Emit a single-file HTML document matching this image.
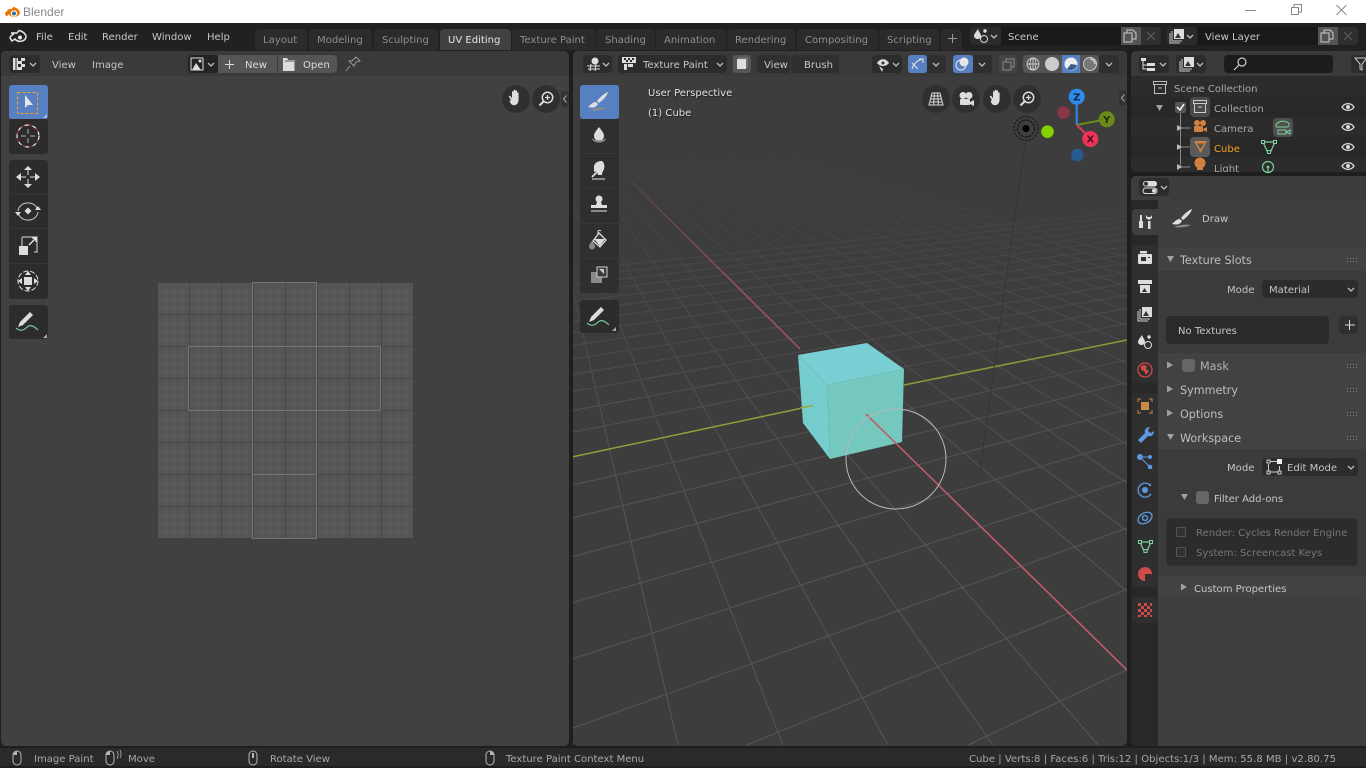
<!DOCTYPE html>
<html><head><meta charset="utf-8"><title>Blender</title>
<style>
html,body{margin:0;padding:0;width:1366px;height:768px;overflow:hidden;background:#1e1e1e}
div{position:absolute;box-sizing:border-box}
.t{white-space:nowrap;font:10.05px/14px "DejaVu Sans","Liberation Sans",sans-serif;color:#c6c6c6;margin-top:4px}
.d{color:#a8a8a8}
.s{text-shadow:1px 1px 1px #1a1a1a;color:#e2e2e2}
.k{background:#2c2c2c;border-radius:4px}
svg{position:absolute;left:0;top:0}
</style></head><body>
<div style="left:0;top:0;width:1366px;height:23px;background:#fff"></div>
<div class="t" style="left:23px;top:0px;font:12px/16px 'Liberation Sans',sans-serif;color:#888">Blender</div>

<div style="left:0;top:23px;width:1366px;height:28px;background:#212121"></div>
<div class="t" style="left:36px;top:27px">File</div>
<div class="t" style="left:68px;top:27px">Edit</div>
<div class="t" style="left:102px;top:27px">Render</div>
<div class="t" style="left:152px;top:27px">Window</div>
<div class="t" style="left:207px;top:27px">Help</div>

<div style="left:255px;top:29px;width:52px;height:21px;background:#2b2b2b;border-radius:4px 4px 0 0"></div>
<div style="left:309px;top:29px;width:63px;height:21px;background:#2b2b2b;border-radius:4px 4px 0 0"></div>
<div style="left:374px;top:29px;width:64px;height:21px;background:#2b2b2b;border-radius:4px 4px 0 0"></div>
<div style="left:440px;top:29px;width:71px;height:21px;background:#414141;border-radius:4px 4px 0 0"></div>
<div style="left:512px;top:29px;width:84px;height:21px;background:#2b2b2b;border-radius:4px 4px 0 0"></div>
<div style="left:597px;top:29px;width:58px;height:21px;background:#2b2b2b;border-radius:4px 4px 0 0"></div>
<div style="left:656px;top:29px;width:70px;height:21px;background:#2b2b2b;border-radius:4px 4px 0 0"></div>
<div style="left:727px;top:29px;width:68px;height:21px;background:#2b2b2b;border-radius:4px 4px 0 0"></div>
<div style="left:797px;top:29px;width:81px;height:21px;background:#2b2b2b;border-radius:4px 4px 0 0"></div>
<div style="left:879px;top:29px;width:60px;height:21px;background:#2b2b2b;border-radius:4px 4px 0 0"></div>
<div style="left:941px;top:29px;width:21px;height:21px;background:#2b2b2b;border-radius:4px 4px 0 0"></div>
<div class="t" style="left:263px;top:30px;color:#8e8e8e">Layout</div>
<div class="t" style="left:317px;top:30px;color:#8e8e8e">Modeling</div>
<div class="t" style="left:382px;top:30px;color:#8e8e8e">Sculpting</div>
<div class="t" style="left:448px;top:30px;color:#e6e6e6">UV Editing</div>
<div class="t" style="left:520px;top:30px;color:#8e8e8e">Texture Paint</div>
<div class="t" style="left:605px;top:30px;color:#8e8e8e">Shading</div>
<div class="t" style="left:664px;top:30px;color:#8e8e8e">Animation</div>
<div class="t" style="left:735px;top:30px;color:#8e8e8e">Rendering</div>
<div class="t" style="left:805px;top:30px;color:#8e8e8e">Compositing</div>
<div class="t" style="left:887px;top:30px;color:#8e8e8e">Scripting</div>

<div class="k" style="left:970px;top:27px;width:31px;height:18px;background:#2b2b2b"></div>
<div style="left:1001px;top:27px;width:120px;height:18px;background:#1a1a1a"></div>
<div style="left:1121px;top:27px;width:20px;height:18px;background:#545454"></div>
<div style="left:1141px;top:27px;width:20px;height:18px;background:#2f2f2f;border-radius:0 4px 4px 0"></div>
<div class="t" style="left:1008px;top:27px">Scene</div>
<div class="k" style="left:1166px;top:27px;width:31px;height:18px;background:#2b2b2b"></div>
<div style="left:1198px;top:27px;width:120px;height:18px;background:#1a1a1a"></div>
<div style="left:1318px;top:27px;width:20px;height:18px;background:#545454"></div>
<div style="left:1338px;top:27px;width:20px;height:18px;background:#2f2f2f;border-radius:0 4px 4px 0"></div>
<div class="t" style="left:1205px;top:27px">View Layer</div>

<!-- UV editor -->
<div style="left:1px;top:51px;width:568px;height:695px;background:#414141;border-radius:5px;overflow:hidden">
  <div style="left:0;top:0;width:568px;height:25px;background:#3a3a3a"></div>
</div>
<div class="k" style="left:9px;top:55px;width:31px;height:18px"></div>
<div class="t" style="left:52px;top:55px">View</div>
<div class="t" style="left:92px;top:55px">Image</div>
<div class="k" style="left:188px;top:55px;width:31px;height:18px;background:#232323"></div>
<div style="left:218px;top:55px;width:59px;height:18px;background:#555;"></div>
<div style="left:278px;top:55px;width:59px;height:18px;background:#555;border-radius:0 4px 4px 0"></div>
<div class="t" style="left:245px;top:55px;color:#ddd">New</div>
<div class="t" style="left:303px;top:55px;color:#ddd">Open</div>

<!-- viewport -->
<div style="left:573px;top:51px;width:554px;height:695px;background:#3d3d3d;border-radius:5px;overflow:hidden">
  <div style="left:0;top:0;width:554px;height:25px;background:#3a3a3a"></div>
</div>

<!-- outliner -->
<div style="left:1131px;top:51px;width:235px;height:121px;background:#282828;border-radius:5px 0 0 5px;overflow:hidden">
  <div style="left:0;top:0;width:235px;height:25px;background:#3a3a3a"></div>
  <div style="left:0;top:25px;width:235px;height:21px;background:#2c2c2c"></div>
  <div style="left:0;top:46px;width:235px;height:20px;background:#282828"></div>
  <div style="left:0;top:66px;width:235px;height:20px;background:#2c2c2c"></div>
  <div style="left:0;top:86px;width:235px;height:20px;background:#282828"></div>
  <div style="left:0;top:106px;width:235px;height:15px;background:#2c2c2c"></div>
</div>
<div class="k" style="left:1139px;top:55px;width:30px;height:18px"></div>
<div class="k" style="left:1176px;top:55px;width:30px;height:18px"></div>
<div class="k" style="left:1224px;top:55px;width:109px;height:18px;background:#1c1c1c"></div>
<div class="k" style="left:1351px;top:55px;width:20px;height:18px"></div>
<div class="t" style="left:1174px;top:79px;color:#a8a8a8">Scene Collection</div>
<div style="left:1190px;top:97px;width:20px;height:20px;background:#4a4a4a;border-radius:4px"></div>
<div style="left:1190px;top:137px;width:20px;height:20px;background:#5a5a5a;border-radius:4px"></div>
<div style="left:1273px;top:118px;width:20px;height:19px;background:#4f4f4f;border-radius:4px"></div>
<div class="t d" style="left:1214px;top:99px">Collection</div>
<div class="t d" style="left:1214px;top:119px">Camera</div>
<div class="t" style="left:1214px;top:139px;color:#f2a11f">Cube</div>
<div style="left:1214px;top:157px;width:60px;height:15px;overflow:hidden"><div class="t d" style="left:0;top:2px">Light</div></div>

<!-- properties -->
<div style="left:1131px;top:176px;width:235px;height:570px;background:#282828;border-radius:5px 0 0 5px;overflow:hidden">
  <div style="left:0;top:0;width:235px;height:24px;background:#3d3d3d"></div>
  <div style="left:27px;top:24px;width:208px;height:546px;background:#3f3f3f"></div>
  <div style="left:27px;top:72px;width:208px;height:23px;background:#424242"></div>
  <div style="left:27px;top:95px;width:208px;height:82px;background:#3b3b3b"></div>
  <div style="left:27px;top:177px;width:208px;height:96px;background:#424242"></div>
  <div style="left:27px;top:273px;width:208px;height:126px;background:#3b3b3b"></div>
  <div style="left:27px;top:400px;width:208px;height:22px;background:#424242"></div>
</div>
<div class="k" style="left:1139px;top:178px;width:30px;height:18px"></div>
<div style="left:1132px;top:209px;width:26px;height:26px;background:#3f3f3f;border-radius:4px 0 0 4px"></div>
<div style="left:1132px;top:245px;width:26px;height:138px;background:#2f2f2f;border-radius:4px 0 0 4px"></div>
<div style="left:1132px;top:393px;width:26px;height:194px;background:#2f2f2f;border-radius:4px 0 0 4px"></div>
<div style="left:1132px;top:597px;width:26px;height:26px;background:#2f2f2f;border-radius:4px 0 0 4px"></div>
<div class="t" style="left:1202px;top:209px">Draw</div>
<div class="t" style="left:1180px;top:250px;font-size:11.2px;color:#bdbdbd">Texture Slots</div>
<div class="t" style="left:1227px;top:280px">Mode</div>
<div class="k" style="left:1262px;top:280px;width:96px;height:18px"></div>
<div class="t" style="left:1269px;top:280px">Material</div>
<div class="k" style="left:1166px;top:316px;width:163px;height:28px;background:#2a2a2a"></div>
<div class="t" style="left:1178px;top:321px">No Textures</div>
<div class="k" style="left:1339px;top:316px;width:19px;height:18px;background:#2f2f2f"></div>
<div style="left:1182px;top:359px;width:13px;height:13px;background:#666;border-radius:3px"></div>
<div class="t" style="left:1200px;top:356px;font-size:11.2px;color:#b0b0b0">Mask</div>
<div class="t" style="left:1180px;top:380px;font-size:11.2px;color:#bdbdbd">Symmetry</div>
<div class="t" style="left:1180px;top:404px;font-size:11.2px;color:#bdbdbd">Options</div>
<div class="t" style="left:1180px;top:428px;font-size:11.2px;color:#bdbdbd">Workspace</div>
<div class="t" style="left:1227px;top:458px">Mode</div>
<div class="k" style="left:1262px;top:458px;width:96px;height:18px"></div>
<div class="t" style="left:1287px;top:458px">Edit Mode</div>
<div style="left:1196px;top:491px;width:13px;height:13px;background:#666;border-radius:3px"></div>
<div class="t" style="left:1214px;top:489px">Filter Add-ons</div>
<div class="k" style="left:1166px;top:518px;width:192px;height:48px;background:#2c2c2c;border:1px solid #333"></div>
<div style="left:1176px;top:527px;width:10px;height:10px;border:1px solid #555;background:#303030;border-radius:2px"></div>
<div style="left:1176px;top:547px;width:10px;height:10px;border:1px solid #555;background:#303030;border-radius:2px"></div>
<div class="t" style="left:1196px;top:523px;color:#767676">Render: Cycles Render Engine</div>
<div class="t" style="left:1196px;top:543px;color:#767676">System: Screencast Keys</div>
<div class="t" style="left:1194px;top:579px;color:#c6c6c6">Custom Properties</div>

<!-- status bar -->
<div style="left:0;top:748px;width:1366px;height:18px;background:#2a2a2a"></div>
<div class="t d" style="left:34px;top:749px">Image Paint</div>
<div class="t d" style="left:128px;top:749px">Move</div>
<div class="t d" style="left:270px;top:749px">Rotate View</div>
<div class="t d" style="left:506px;top:749px">Texture Paint Context Menu</div>
<div class="t d" style="right:30px;top:749px;letter-spacing:.03px">Cube | Verts:8 | Faces:6 | Tris:12 | Objects:1/3 | Mem: 55.8 MB | v2.80.75</div>

<svg width="1366" height="768" viewBox="0 0 1366 768" fill="none">
<defs>
<linearGradient id="fade" gradientUnits="userSpaceOnUse" x1="0" y1="150" x2="0" y2="520"><stop offset="0" stop-color="#565656" stop-opacity="0"/><stop offset=".4" stop-color="#565656" stop-opacity=".5"/><stop offset="1" stop-color="#565656"/></linearGradient>
<linearGradient id="rf" gradientUnits="userSpaceOnUse" x1="0" y1="170" x2="0" y2="300"><stop offset="0" stop-color="#a04e5a" stop-opacity=".15"/><stop offset="1" stop-color="#b05562"/></linearGradient>
<clipPath id="vp"><rect x="573" y="76" width="554" height="670"/></clipPath>
<g id="ch"><path d="M0 0l3 3 3-3" stroke="#bdbdbd" stroke-width="1.3"/></g>
<g id="eye"><path d="M-6 0c3-4.500 9-4.500 12 0c-3 4.500-9 4.500-12 0z" stroke="#ddd" stroke-width="1.3"/><circle r="2" fill="#ddd"/></g>
<g id="tri"><path d="M-3-3h7l-3.500 6z" fill="#a0a0a0"/></g>
<g id="trr"><path d="M-3-3.500l6 3.500-6 3.500z" fill="#a0a0a0"/></g>
<g id="grip" fill="#8a8a8a"><rect x="0" y="0" width="1" height="1"/><rect x="3" y="0" width="1" height="1"/><rect x="6" y="0" width="1" height="1"/><rect x="9" y="0" width="1" height="1"/><rect x="0" y="3" width="1" height="1"/><rect x="3" y="3" width="1" height="1"/><rect x="6" y="3" width="1" height="1"/><rect x="9" y="3" width="1" height="1"/></g>
<g id="hand"><path d="M-5 1l-2-3c-.6-1 .8-1.800 1.500-.8l1.500 2v-6c0-1.300 1.600-1.300 1.600 0v4v-5.500c0-1.300 1.700-1.300 1.700 0v5.500v-5c0-1.300 1.700-1.300 1.700 0v5.500v-3.500c0-1.300 1.600-1.300 1.600 0v6c0 4-2 6-4.500 6s-3.500-1.500-4.600-4.200z" fill="#ddd"/></g>
<g id="zoom"><circle cx="1.500" cy="-1.500" r="5.200" stroke="#ddd" stroke-width="1.500"/><path d="M-2.500 2.500l-4 4" stroke="#ddd" stroke-width="2"/><path d="M-1 -1.500h5M1.500-4v5" stroke="#ddd" stroke-width="1.200"/></g>
<g id="brush"><path d="M9-10c-3 1-8 5-11 9l2 2c4-3 8-7 9-11z" fill="#ddd"/><path d="M-3 0c-3 0-5 2-8 5 4 1 8 1 10-3z" fill="#ddd"/><path d="M-9 8c4-2 12-3 17-2-3 2-12 3-17 2z" fill="#8a8a8a"/></g>
<g id="pen"><path d="M3-10l3 3-10 10-5 2 2-5z" fill="#ddd"/><path d="M-11 6c3 3 7 3 10 0s6-4 12 2" stroke="#7cc79b" stroke-width="1.200"/></g>
<g id="corner"><path d="M4 0v4h-4z" fill="#aaa"/></g>
<g id="mouse"><rect x="-4" y="-7" width="8" height="14" rx="4" stroke="#b5b5b5"/><path d="M-4-3v-1a4 3.500 0 0 1 4-3v4z" fill="#b5b5b5"/></g>
<g id="dup"><rect x="-6" y="-3" width="8" height="9" fill="none" stroke="#ccc"/><path d="M-3-3v-3h6l3 3v6h-4" stroke="#ccc"/></g>
<g id="x"><path d="M-4-4l8 8M4-4l-8 8" stroke="#5c5c5c" stroke-width="1.200"/></g>
<g id="layers"><rect x="-3" y="-7" width="10" height="10" fill="#ddd"/><path d="M-5-5v10h10M-7-3v10h10" stroke="#ccc"/><path d="M-2 2l3-5 3 5z" fill="#333"/></g>
<g id="scene"><path d="M-3-7c-2 3-4 5-4 7 0 2 2 3 4 3s3-2 3-3c0-2-2-4-3-7z" fill="#ddd"/><circle cx="4" cy="-5" r="1.700" fill="#ddd"/><circle cx="3" cy="3" r="3.500" stroke="#ddd"/></g>
</defs>

<!-- Title logo -->
<g transform="translate(12,12)"><path d="M-7 2c0-2 2-3 4-4.500l-3-.5h5.500l2.500-2.500l1 1c3 1 5 3 5 5.500a6 5 0 0 1-11 1.500l-2.500 2z" fill="#ea7600"/><circle cx="2" cy="1.500" r="3.200" fill="#fff"/><circle cx="2" cy="1.500" r="2" fill="#2f6ea5"/></g>
<!-- window controls -->
<path d="M1245 10.500h11" stroke="#888"/>
<path d="M1291.500 7.500h7v7h-7zM1294 7v-2.500h7.500v7.500h-3" stroke="#888"/>
<path d="M1336.500 5l10 10M1346.500 5l-10 10" stroke="#888" stroke-width="1"/>
<!-- top bar logo -->
<g transform="translate(18,36)"><path d="M-8 2c0-2 3-3 4-4.500l-3-.5h6l2-2.500c3 .5 7 3 7 6.500a6 5 0 0 1-11 2l-3 2z" stroke="#e6e6e6" stroke-width="1.500"/><circle cx="2" cy="1.500" r="2" fill="#e6e6e6"/></g>
<path d="M948 38.500h9M952.500 34v9" stroke="#999"/>
<use href="#scene" x="981" y="36"/><use href="#ch" x="991" y="35"/>
<use href="#dup" x="1130" y="36"/><use href="#x" x="1151" y="36"/>
<use href="#layers" x="1177" y="36"/><use href="#ch" x="1187" y="35"/>
<use href="#dup" x="1327" y="36"/><use href="#x" x="1348" y="36"/>

<!-- UV header icons -->
<g transform="translate(19,64)"><rect x="-6" y="-6" width="12" height="12" fill="#ddd"/><path d="M-1-6h3v3h-3zM3-3h3v3h-3zM-1 0h3v3h-3zM3 3h3v3h-3z" fill="#2c2c2c"/><path d="M-3-6v12" stroke="#2c2c2c"/></g>
<use href="#ch" x="30" y="63"/>
<g transform="translate(197,64)"><rect x="-6" y="-6" width="12" height="12" stroke="#ddd"/><path d="M-5 6l4-7 5 7z" fill="#ddd"/><circle cx="3" cy="-3" r="1.500" fill="#ddd"/></g>
<use href="#ch" x="208" y="63"/>
<path d="M225 64.500h9M229.500 60v9" stroke="#ddd"/>
<path d="M283 58h4l1.500 2h6v11h-11.500z" fill="#ddd"/><path d="M285 61h9" stroke="#555"/>
<g transform="translate(353,64)" stroke="#9a9a9a"><path d="M-1-3l4-4 4 4-4 1-2 4-5-5z"/><path d="M-3 2l-4 5"/></g>

<!-- UV image -->
<rect x="158" y="283" width="255" height="255" fill="#555"/>
<path stroke="#5c5c5c" d="M166.500 283v255M174.500 283v255M182.500 283v255M198.500 283v255M206.500 283v255M214.500 283v255M230.500 283v255M238.500 283v255M246.500 283v255M262.500 283v255M270.500 283v255M278.500 283v255M294.500 283v255M302.500 283v255M310.500 283v255M326.500 283v255M334.500 283v255M342.500 283v255M358.500 283v255M366.500 283v255M374.500 283v255M390.500 283v255M398.500 283v255M406.500 283v255M158 291.500h255M158 299.500h255M158 307.500h255M158 323.500h255M158 331.500h255M158 339.500h255M158 355.500h255M158 363.500h255M158 371.500h255M158 387.500h255M158 395.500h255M158 403.500h255M158 419.500h255M158 427.500h255M158 435.500h255M158 451.500h255M158 459.500h255M158 467.500h255M158 483.500h255M158 491.500h255M158 499.500h255M158 515.500h255M158 523.500h255M158 531.500h255"/>
<path stroke="#474747" d="M189.500 283v255M221.500 283v255M253.500 283v255M285.500 283v255M317.500 283v255M349.500 283v255M381.500 283v255M158 314.500h255M158 346.500h255M158 378.500h255M158 410.500h255M158 442.500h255M158 474.500h255M158 506.500h255"/>
<path stroke="#747474" d="M252.500 282.500h64v256h-64zM188.500 346.500h192v64h-192zM252.500 474.500h64"/>

<!-- viewport -->
<g clip-path="url(#vp)">
<path stroke="url(#fade)" stroke-width="1" d="M524 79L573 745M524 79L678 745M524 79L783 745M524 79L888 745M524 79L993 745M524 79L1098 745M524 79L1308 745M524 79L1413 745M524 79L1518 745M524 79L1623 745M524 79L1728 745M524 79L1833 745M524 79L1938 745M524 79L2043 745M524 79L2148 745M524 79L2253 745M524 79L2358 745M524 79L2463 745M524 79L2568 745M524 79L2673 745M524 79L2778 745
M2371 79L1189 745M2371 79L968 745M2371 79L747 745M2371 79L526 745M2371 79L305 745M2371 79L84 745M2371 79L-137 745M2371 79L-358 745M2371 79L-579 745M2371 79L-1021 745M2371 79L-1242 745M2371 79L-1463 745M2371 79L-1684 745M2371 79L-1905 745M2371 79L-2126 745M2371 79L-2347 745M2371 79L-2568 745M2371 79L-2789 745M2371 79L-3010 745M2371 79L-3231 745M2371 79L-3452 745M2371 79L-3673 745M2371 79L-3894 745"/>
<path d="M630 180L800 349" stroke="url(#rf)" stroke-width="1.300"/>
<path d="M904 385L1127 340" stroke="#8a9d36" stroke-width="1.500"/>
<path d="M572 457L800 408.500" stroke="#8fa23a" stroke-width="1.500"/>
<path d="M980 470L1025 142" stroke="#333" stroke-width=".8"/>
<!-- cube -->
<path d="M798 355L867 343 904 369 827 385z" fill="#79cfd3"/>
<path d="M798 355L827 385 830 459 803 423z" fill="#75cdcd"/>
<path d="M827 385L904 369 902 442 830 459z" fill="#74c8be"/>
<path d="M800 408L813 405.500" stroke="#9ba93c" stroke-width="1.500"/>
<path d="M803 423L902 398M815 400L866 414" stroke="#80cdc8" stroke-width=".6"/>
<path d="M866 414L1127 670" stroke="#c25a6a" stroke-width="1.600"/>
<circle cx="896" cy="459" r="50" stroke="#b8b8b8" stroke-width="1"/>
<!-- gizmo line -->
<circle cx="1026" cy="128.500" r="12" stroke="#111" stroke-dasharray="2 1.500"/><circle cx="1026" cy="128.500" r="8.500" stroke="#111" stroke-dasharray="3 1"/><circle cx="1026" cy="128.500" r="3.500" fill="#000"/>
</g>
<circle cx="1047.500" cy="131.700" r="6.300" fill="#85d000"/>
<path d="M1076.700 125V100" stroke="#2d8ceb" stroke-width="2"/><path d="M1076.700 125L1100 120.500" stroke="#6a8a1a" stroke-width="2"/><path d="M1076.700 125L1088 136" stroke="#e8335a" stroke-width="2"/>
<circle cx="1063.700" cy="112.700" r="6.300" fill="#8b3546"/><circle cx="1077.300" cy="155" r="6.300" fill="#265a90"/>
<circle cx="1076.700" cy="96.700" r="8" fill="#2d8ceb"/><circle cx="1106.700" cy="119.300" r="8" fill="#6a8a1a"/><circle cx="1090.300" cy="139" r="8" fill="#f0335a"/>
<text x="1076.700" y="100.500" text-anchor="middle" font-family="DejaVu Sans" font-weight="bold" font-size="10" fill="#12253f">Z</text>
<text x="1106.700" y="123" text-anchor="middle" font-family="DejaVu Sans" font-weight="bold" font-size="10" fill="#1e2a08">Y</text>
<text x="1090.300" y="142.500" text-anchor="middle" font-family="DejaVu Sans" font-weight="bold" font-size="10" fill="#4a0f1c">X</text>

<!-- nav circles -->
<circle cx="516" cy="99" r="14" fill="#2f2f2f"/><circle cx="546" cy="99" r="14" fill="#2f2f2f"/>
<use href="#hand" x="516" y="99"/><use href="#zoom" x="546" y="99"/>
<rect x="561" y="91" width="8" height="16" rx="3" fill="#333"/><path d="M566.500 95.500l-3 3.500 3 3.500" stroke="#aaa"/>
<circle cx="936" cy="99" r="14" fill="#2f2f2f"/><circle cx="966" cy="99" r="14" fill="#2f2f2f"/><circle cx="997" cy="99" r="14" fill="#2f2f2f"/><circle cx="1027" cy="99" r="14" fill="#2f2f2f"/>
<g transform="translate(936,99)" stroke="#ddd"><path d="M-4-6h8l3 12h-14zM-5.500 0h11M-1.500-6l-1 12M1.500-6l1 12M-4.500-3h9M-6 3h12"/></g>
<g transform="translate(966,99)" fill="#ddd"><circle cx="-3" cy="-3.500" r="3.500"/><circle cx="3" cy="-3.500" r="3.500"/><rect x="-6" y="0" width="10" height="6" rx="1"/><path d="M4 3l4-2v6l-4-2z"/></g>
<use href="#hand" x="997" y="99"/><use href="#zoom" x="1027" y="99"/>
<rect x="1119" y="90" width="8" height="16" rx="3" fill="#333"/><path d="M1124.500 94.500l-3 3.500 3 3.500" stroke="#aaa"/>

<!-- viewport header -->
<rect x="583" y="55" width="29" height="18" rx="4" fill="#2c2c2c"/>
<g transform="translate(594,64)" stroke="#ddd"><path d="M-7 2h13M-6 5h12M-3 0l-1 7M2 0l-1 7"/><circle cx="1" cy="-3" r="3" fill="#ddd"/></g><use href="#ch" x="603" y="63"/>
<rect x="618" y="55" width="109" height="18" rx="4" fill="#2c2c2c"/>
<g transform="translate(629,63)" fill="#ddd"><path d="M-7-6h14v6h-14z"/><path d="M-5 1h3v6h-3zM-1 1h5v3h-5z"/><path d="M-5-5h2v2h-2zM-1-5h2v2h-2zM3-5h2v2h-2zM-3-3h2v2h-2zM1-3h2v2h-2z" fill="#2c2c2c"/></g>
<use href="#ch" x="717" y="63"/>
<rect x="733" y="55" width="18" height="18" rx="3" fill="#565656"/>
<path d="M737 59h9v10h-9z" fill="#ddd"/><path d="M739 59v-1h8v9h-1" stroke="#888"/>
<rect x="757" y="55" width="33" height="18" rx="3" fill="#2f2f2f"/><rect x="791" y="55" width="48" height="18" rx="3" fill="#2f2f2f"/>
<rect x="872" y="55" width="30" height="18" rx="4" fill="#2c2c2c"/>
<g transform="translate(884,64)"><path d="M-7-1c3-5 9-5 12 0c-3 4-9 4-12 0z" fill="#ddd"/><circle cx="-1" cy="-1" r="1.500" fill="#333"/><path d="M-5 2l3 6 1-3z" fill="#ddd"/></g><use href="#ch" x="893" y="63"/>
<rect x="908" y="55" width="19" height="18" rx="3" fill="#5680c2"/><rect x="927" y="55" width="19" height="18" rx="3" fill="#2f2f2f"/>
<path d="M912 69c2-6 6-9 11-10M919 59h4v4M912 63l6 6" stroke="#e6e6e6"/><use href="#ch" x="933" y="63"/>
<rect x="953" y="55" width="20" height="18" rx="3" fill="#5680c2"/><rect x="973" y="55" width="19" height="18" rx="3" fill="#2f2f2f"/>
<circle cx="961" cy="65" r="5" stroke="#e6e6e6"/><circle cx="964" cy="62" r="4.500" fill="#e6e6e6"/><use href="#ch" x="979" y="63"/>
<rect x="999" y="55" width="18" height="18" rx="3" fill="#444"/><path d="M1003 62h8v8h-8zM1006 62v-3h8v8h-3" stroke="#8a8a8a"/>
<rect x="1023" y="55" width="76" height="18" rx="4" fill="#555"/><rect x="1062" y="55" width="18" height="18" fill="#5680c2"/><rect x="1099" y="55" width="20" height="18" rx="3" fill="#2f2f2f"/>
<g stroke="#ccc"><circle cx="1033" cy="64" r="6"/><path d="M1027 64h12M1033 58v12"/><ellipse cx="1033" cy="64" rx="3" ry="6"/></g>
<circle cx="1052" cy="64" r="7" fill="#ccc"/>
<circle cx="1071" cy="64" r="6.500" fill="#eee"/><path d="M1071 64l6 1a6.500 6.500 0 0 1-10 4z" fill="#3a5a8c"/>
<circle cx="1090" cy="64" r="6.500" stroke="#ccc" fill="#777"/><path d="M1090 59a5 5 0 0 1 5 5" stroke="#eee"/>
<use href="#ch" x="1106" y="63"/>

<!-- left toolbar -->
<rect x="9" y="119" width="39" height="35" rx="3" fill="#2c2c2c"/><rect x="9" y="85" width="39" height="34" rx="3" fill="#5680c2"/>
<rect x="17.500" y="92.500" width="20" height="21" stroke="#f5a623" stroke-dasharray="3 2"/><path d="M25 95v13l3-3 5 0z" fill="#e6e6e6"/><path d="M47 114v4h-4z" fill="#a9c0e6"/>
<circle cx="28" cy="136" r="11" stroke="#eee" stroke-width="1.200" stroke-dasharray="5 3"/><circle cx="28" cy="136" r="11" stroke="#a33" stroke-width="1.200" stroke-dasharray="3 5" stroke-dashoffset="4"/><path d="M21 136h5M30 136h5M28 129v5M28 138v5" stroke="#999" stroke-width="1.200"/>
<rect x="9" y="160" width="39" height="139" rx="3" fill="#2c2c2c"/>
<path d="M9 194h39M9 228.500h39M9 263.500h39" stroke="#363636"/>
<g transform="translate(28,177)" fill="#ddd" stroke="#ddd"><path d="M0-11l4 4h-8zM0 11l4-4h-8zM-12 0l5-4v8zM12 0l-5-4v8z" stroke="none"/><path d="M-7 0h5M2 0h5M0-7v5M0 2v5"/></g>
<g transform="translate(28,211)"><path d="M-10 0a10 9 0 0 1 19-3M10 1a10 9 0 0 1-19 3" stroke="#ccc"/><path d="M0-3.500l3.500 3.500-3.500 3.500-3.500-3.500z" fill="#ddd"/><path d="M-13 1h6l-3 4zM13-1h-6l3-4z" fill="#ddd"/></g>
<g transform="translate(28,246)"><path d="M-6-9h15v15h-3" stroke="#bbb" stroke-width="1.200"/><path d="M-6-9v9" stroke="#bbb" stroke-width="1.200"/><rect x="-9" y="0" width="9" height="9" fill="#ddd"/><path d="M1-1l7-7M4-8h4v4" stroke="#eee" stroke-width="1.300"/></g>
<g transform="translate(28,281)"><circle r="10" stroke="#ddd" stroke-dasharray="5 2"/><rect x="-4" y="-4" width="8" height="8" fill="#ddd"/><path d="M0-10l3 4h-6zM0 10l3-4h-6zM-10 0l4-3v6zM10 0l-4-3v6z" fill="#ddd"/></g>
<rect x="9" y="305" width="39" height="34" rx="3" fill="#2c2c2c"/><use href="#pen" x="27" y="322"/><use href="#corner" x="43" y="334"/>

<!-- viewport toolbar -->
<rect x="580" y="118" width="39" height="175" rx="3" fill="#2f2f2f"/><rect x="580" y="85" width="39" height="34" rx="3" fill="#5680c2"/>
<path d="M580 153.500h39M580 188.500h39M580 223.500h39M580 258.500h39" stroke="#383838"/>
<use href="#brush" x="599" y="102"/>
<g transform="translate(599,135)"><path d="M0-8c-3 4-5 6-5 9a5 5 0 0 0 10 0c0-3-2-5-5-9z" fill="#ddd"/><path d="M-7 3c0 6 14 6 14 0-2 3-12 3-14 0z" fill="#8a8a8a"/></g>
<g transform="translate(599,170)"><path d="M-5-4c1-4 5-5 8-5 3 2 3 8 1 10-1 2-1 3-1 4h-4l-1-4-3 1z" fill="#ddd"/><path d="M-7 7l6-6" stroke="#ddd" stroke-width="1.800"/><path d="M-7 9h13" stroke="#8a8a8a" stroke-width="2"/></g>
<g transform="translate(599,205)"><circle cy="-6" r="3.500" fill="#ddd"/><path d="M-2-3h4l1 3h5v3h-16v-3h5z" fill="#ddd"/><path d="M-8 6h16" stroke="#8a8a8a" stroke-width="2"/></g>
<g transform="translate(599,240)"><path d="M0-7l7 7-6 7-7-6z" stroke="#ddd" stroke-width="1.300" fill="#3a3a3a"/><path d="M-5-1h11l-5 7z" fill="#ddd"/><path d="M-7 1c-2 3-3 4-3 5.500a3 3 0 0 0 6 0c0-1.500-1-2.500-3-5.500z" fill="#8a8a8a"/><path d="M-1-6v-3a2 2 0 0 1 3 0" stroke="#ddd"/></g>
<g transform="translate(599,275)"><rect x="-8" y="-3" width="11" height="11" fill="#8a8a8a"/><rect x="-2" y="-8" width="10" height="10" fill="#3a3a3a" stroke="#ccc"/><path d="M0-6h5v5z" fill="#ccc"/></g>
<rect x="580" y="300" width="39" height="33" rx="3" fill="#2c2c2c"/><use href="#pen" x="598" y="317"/><use href="#corner" x="612" y="327"/>

<!-- outliner icons -->
<g transform="translate(1150,64)" fill="#ddd"><path d="M-9-6h5v3h-5zM-3-1h8v3h-8zM-3 4h8v3h-8z"/><path d="M-7-3v8h4M-7 1h4" stroke="#ddd" fill="none"/></g><use href="#ch" x="1160" y="63"/>
<use href="#layers" x="1187" y="64"/><use href="#ch" x="1197" y="63"/>
<g transform="translate(1241,63)" stroke="#ccc" stroke-width="1.200"><circle cx="1" cy="-1" r="4"/><path d="M-2 2l-5 5"/></g>
<path d="M1355 58h12l-5 6v6l-2-1v-5z" stroke="#ccc"/>
<g transform="translate(1160,88)" stroke="#bbb"><path d="M-6.500-6.500h13v3h-13zM-5.500-3.500v9h11v-9M-2 0h4"/></g>
<use href="#tri" x="1159" y="108"/>
<rect x="1175" y="102" width="11" height="11" rx="2" fill="#555"/><path d="M1177 107l3 3 4-6" stroke="#fff" stroke-width="1.500"/>
<g transform="translate(1200,107)" stroke="#ccc"><path d="M-6.500-6.500h13v3h-13zM-5.500-3.500v9h11v-9M-2 0h4"/></g>
<path d="M1180.500 113v55" stroke="#888"/><path d="M1181 128h10M1181 147h9M1181 167h9" stroke="#888"/>
<path d="M1177 125l5 3-5 3zM1177 144l5 3-5 3zM1177 164l5 3-5 3z" fill="#bbb"/>
<g transform="translate(1200,127)" fill="#d2803f"><circle cx="-3" cy="-4" r="3"/><circle cx="3" cy="-4" r="3"/><rect x="-6" y="-1" width="9" height="6" rx="1"/><path d="M3 2l4-2v5l-4-2z"/></g>
<path d="M1194 141h13l-6.500 12z" fill="#d2803f"/><path d="M1197 143.500h7l-3.500 6z" fill="#5a5a5a"/>
<g transform="translate(1200,165)"><circle cy="-2" r="5.500" fill="#d2803f"/><path d="M-3 4h6" stroke="#d2803f" stroke-width="2"/></g>
<g transform="translate(1283,127)" stroke="#7fd09a"><path d="M-7-1c0-4 7-6 10-4 4 0 4 5 1 5h-10c-1 0-1-1-1-1zM-5 3h8v4h-8zM3 5l4-2v4z"/></g>
<path d="M1263 142h12l-4.500 10h-3z" stroke="#7fd09a" stroke-width="1.200"/><path d="M1261.500 140.500h3v3h-3zM1273.500 140.500h3v3h-3zM1267.500 150.500h3v3h-3z" stroke="#7fd09a" fill="#2c2c2c"/>
<g transform="translate(1268,167)" stroke="#7fd09a" stroke-width="1.200"><circle r="5.500"/><circle r=".8"/><path d="M0 1v4"/></g>
<use href="#eye" x="1348" y="107"/><use href="#eye" x="1348" y="127"/><use href="#eye" x="1348" y="147"/><use href="#eye" x="1348" y="166"/>

<!-- properties header & tabs -->
<g transform="translate(1150,187)"><rect x="-7" y="-6" width="14" height="5.500" rx="2.700" fill="#ddd"/><rect x="-7" y="1" width="14" height="5.500" rx="2.700" stroke="#ddd"/><circle cx="-4" cy="-3.300" r="2" fill="#333"/><circle cx="4" cy="3.700" r="2" fill="#ddd"/></g><use href="#ch" x="1161" y="186"/>
<g transform="translate(1145,222)" fill="#ddd"><path d="M-5-7h2v6h-2zM-6-1h4v7h-4z"/><path d="M3-1h2.500v8h-2.500z"/><path d="M1-7v3l3 2 3-2v-3l-1.500 2h-3z"/></g>
<use href="#brush" x="1184" y="218" transform="translate(-1,1)"/>
<g transform="translate(1145,258)" fill="#ddd"><rect x="-7" y="-4" width="14" height="10" rx="1"/><rect x="-5" y="-7" width="7" height="2.500"/><path d="M-4-1h5v4h-5zM3-1h2v1h-2z" fill="#2f2f2f"/></g>
<g transform="translate(1145,286)" fill="#ddd"><rect x="-7" y="-6" width="14" height="4"/><rect x="-5" y="-1" width="10" height="8"/><path d="M-3 6l2.500-4 2.500 4z" fill="#2f2f2f"/></g>
<use href="#layers" x="1145" y="314"/><use href="#scene" x="1145" y="342"/>
<g transform="translate(1145,370)"><circle r="7" stroke="#cf4a4a" stroke-width="1.300"/><path d="M-4-4l3-1 3 1-1 3 3 2-3 4-2-4-3-1z" fill="#cf4a4a"/></g>
<g transform="translate(1145,406)"><rect x="-4" y="-4" width="8" height="8" fill="#c98a4a"/><path d="M-7-4v-3h3M4-7h3v3M7 4v3h-3M-4 7h-3v-3" stroke="#c98a4a"/></g>
<g transform="translate(1145,434)"><path d="M-7 6l7-7c-1-3 1-6 5-6l-2 3 1 2 2 1 3-2c0 4-3 6-6 5l-7 7z" fill="#5b9ae0"/></g>
<g transform="translate(1145,462)" stroke="#5b9ae0" stroke-width="1"><path d="M-5-5l10 0M-5-5l9 9"/><circle cx="-5" cy="-5" r="2.500" fill="#5b9ae0"/><circle cx="5" cy="-5" r="1.500" fill="#5b9ae0"/><circle cx="5" cy="5" r="1.800" fill="#5b9ae0"/></g>
<g transform="translate(1145,490)"><path d="M5-5a7 7 0 1 0 1 9" stroke="#5b9ae0" stroke-width="1.300"/><circle cx="0" cy="0" r="3" fill="#5b9ae0"/><circle cx="5" cy="-5" r="1.200" fill="#5b9ae0"/></g>
<g transform="translate(1145,518)" stroke="#5b9ae0" stroke-width="1.300"><ellipse rx="7.500" ry="5" transform="rotate(-30)"/><circle r="2.500"/></g>
<path d="M1140 542h11l-4 9h-3z" stroke="#7fd09a" stroke-width="1.300"/><path d="M1138.500 540.500h3v3h-3zM1149.500 540.500h3v3h-3zM1144 549.500h3v3h-3z" stroke="#7fd09a" fill="#2f2f2f"/>
<g transform="translate(1145,574)"><circle r="7" fill="#cf4a4a"/><path d="M0 0h7a7 7 0 0 1-7 7z" fill="#2f2f2f"/></g>
<g transform="translate(1145,610)"><rect x="-7" y="-7" width="14" height="14" fill="#cf4a4a"/><path d="M-4-7h3v3h-3zM2-7h3v3h-3zM-7-4h3v3h-3zM-1-4h3v3h-3zM5-4h2v3h-2zM-4-1h3v3h-3zM2-1h3v3h-3zM-7 2h3v3h-3zM-1 2h3v3h-3zM5 2h2v3h-2zM-4 5h3v2h-3zM2 5h3v2h-3z" fill="#2f2f2f"/></g>

<!-- properties panel icons -->
<use href="#tri" x="1170" y="259"/><use href="#trr" x="1170" y="365"/><use href="#trr" x="1170" y="389"/><use href="#trr" x="1170" y="413"/><use href="#tri" x="1170" y="437"/><use href="#tri" x="1184" y="497"/><use href="#trr" x="1184" y="587"/>
<use href="#grip" x="1347" y="258"/><use href="#grip" x="1347" y="364"/><use href="#grip" x="1347" y="388"/><use href="#grip" x="1347" y="412"/><use href="#grip" x="1347" y="436"/>
<use href="#ch" x="1348" y="288"/><use href="#ch" x="1348" y="466"/>
<path d="M1345 325h10M1349.500 320v10" stroke="#ddd"/>
<g transform="translate(1274,467)"><path d="M-5.500-5.500h9M-5.500-3v8h11v-6" stroke="#ccc"/><rect x="-7" y="-7" width="3" height="3" stroke="#ccc" fill="#2c2c2c"/><rect x="-7" y="4" width="3" height="3" stroke="#ccc" fill="#2c2c2c"/><rect x="4" y="4" width="3" height="3" stroke="#ccc" fill="#2c2c2c"/><rect x="3" y="-8" width="5" height="5" fill="#eee"/></g>

<!-- status icons -->
<use href="#mouse" x="17" y="758"/><use href="#mouse" x="110" y="758"/><path d="M117 751a8 8 0 0 1 0 8M120 750a9 9 0 0 1 0 8" stroke="#999"/>
<g transform="translate(253,758)"><rect x="-4" y="-7" width="8" height="14" rx="4" stroke="#b5b5b5"/><rect x="-1" y="-5" width="2" height="5" fill="#b5b5b5"/></g>
<g transform="translate(490,758)"><rect x="-4" y="-7" width="8" height="14" rx="4" stroke="#b5b5b5"/><path d="M0-7a4 3.500 0 0 1 4 4v0h-4z" fill="#b5b5b5"/></g>
</svg>
<div class="t s" style="left:648px;top:83px">User Perspective</div>
<div class="t s" style="left:648px;top:103px">(1) Cube</div>
<div class="t" style="left:764px;top:55px">View</div>
<div class="t" style="left:804px;top:55px">Brush</div>
<div class="t" style="left:643px;top:55px">Texture Paint</div>
</body></html>
